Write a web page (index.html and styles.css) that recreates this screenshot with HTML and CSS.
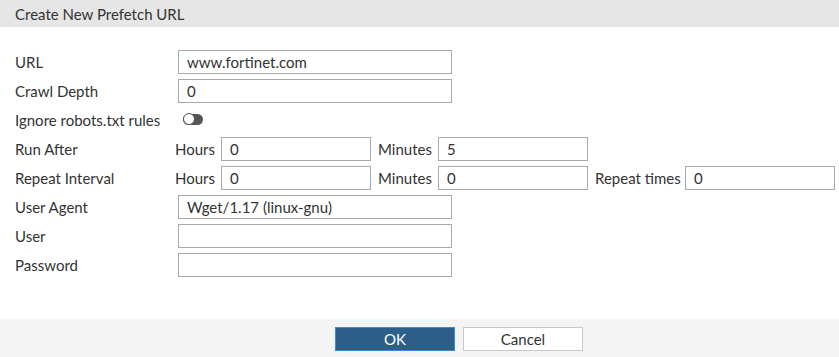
FILE: index.html
```html
<!DOCTYPE html>
<html lang="en">
<head>
  <meta charset="UTF-8" />
  <meta name="viewport" content="width=device-width, initial-scale=1.0"/>
  <title>Create New Prefetch URL</title>
  <link rel="stylesheet" href="styles.css">
</head>
<body>

  <div class="dialog-title">Create New Prefetch URL</div>

  <div class="form">
    <div class="row">
      <label class="label">URL</label>
      <input type="text" class="field" value="www.fortinet.com" />
    </div>
    <div class="row">
      <label class="label">Crawl Depth</label>
      <input type="text" class="field" value="0" />
    </div>
    <div class="row">
      <label class="label">Ignore robots.txt rules</label>
      <span class="toggle"><span class="knob"></span></span>
    </div>
    <div class="row">
      <label class="label">Run After</label>
      <span class="unit">Hours</span>
      <input type="text" class="small" value="0" />
      <span class="unit unit-min">Minutes</span>
      <input type="text" class="small" value="5" />
    </div>
    <div class="row">
      <label class="label">Repeat Interval</label>
      <span class="unit">Hours</span>
      <input type="text" class="small" value="0" />
      <span class="unit unit-min">Minutes</span>
      <input type="text" class="small" value="0" />
      <span class="unit unit-rep">Repeat times</span>
      <input type="text" class="small" value="0" />
    </div>
    <div class="row">
      <label class="label">User Agent</label>
      <input type="text" class="field" value="Wget/1.17 (linux-gnu)" />
    </div>
    <div class="row">
      <label class="label">User</label>
      <input type="text" class="field" value="" />
    </div>
    <div class="row">
      <label class="label">Password</label>
      <input type="password" class="field" value="" />
    </div>
  </div>

  <footer>
    <button class="btn btn-ok">OK</button>
    <button class="btn btn-cancel">Cancel</button>
  </footer>

</body>
</html>
```

FILE: styles.css
```css
body {
  font-family: Lato, "Liberation Sans", sans-serif;
  font-size: 15px;
  color: #333;
  background: #fff;
  margin: 0;
}

.dialog-title {
  height: 27px;
  line-height: 28px;
  padding-left: 15px;
  background-color: #e6e6e6;
  color: #333;
}

.form {
  display: flex;
  flex-direction: column;
  gap: 5px;
  padding: 23px 15px 0;
}

.row {
  display: flex;
  align-items: center;
  height: 24px;
}

.label {
  width: 160px;
  flex-shrink: 0;
}

input[type="text"],
input[type="password"] {
  box-sizing: border-box;
  height: 24px;
  padding: 0 8px;
  border: 1px solid #a9a9a9;
  border-radius: 0;
  font-family: inherit;
  font-size: 15px;
  color: #333;
  outline: none;
}

.field {
  width: 274px;
  margin-left: 3px;
}

.small {
  width: 150px;
}

.unit {
  width: 46px;
  flex-shrink: 0;
}

.unit-min {
  width: 60px;
  margin-left: 7px;
}

.unit-rep {
  width: 90px;
  margin-left: 7px;
}

.toggle {
  position: relative;
  display: inline-block;
  width: 20px;
  height: 11px;
  margin-left: 8px;
  margin-top: -2px;
  border-radius: 6px;
  background: #555;
}

.toggle .knob {
  position: absolute;
  left: 0;
  top: -0.5px;
  width: 10px;
  height: 10px;
  border-radius: 50%;
  background: #fff;
  border: 1px solid #555;
}

footer {
  display: flex;
  gap: 8px;
  height: 38px;
  box-sizing: border-box;
  margin-top: 42px;
  padding: 8px 0 0 335px;
  background-color: #f4f4f4;
}

.btn {
  box-sizing: border-box;
  width: 120px;
  height: 24px;
  font-family: inherit;
  font-size: 15px;
  cursor: pointer;
}

.btn-ok {
  background-color: #2c5f8a;
  border: 1px solid #3a8ad6;
  color: #fff;
}

.btn-cancel {
  background-color: #fff;
  border: 1px solid #c8c8c8;
  color: #333;
}
```
